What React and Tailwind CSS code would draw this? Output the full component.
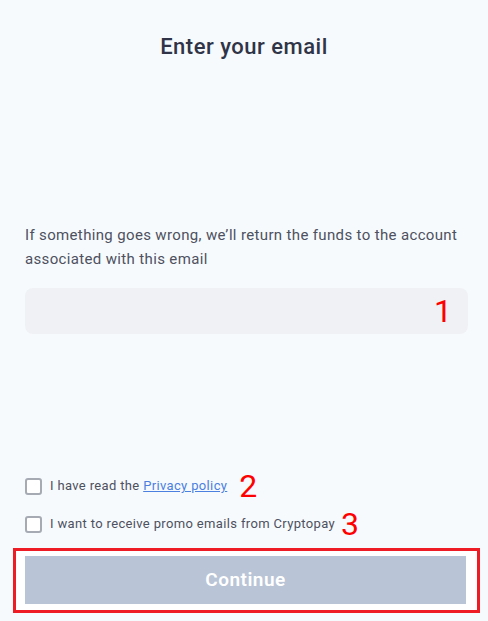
export default function App() {
  return (
    <div
      className="w-[488px] h-[621px] bg-[#f7fafd] flex flex-col"
      style={{ fontFamily: "Roboto, 'Liberation Sans', sans-serif" }}
    >
      {/* title */}
      <h1 className="pt-[33px] text-center text-[22px] font-medium tracking-[0.5px] text-[#2f3447] leading-[28px]">
        Enter your email
      </h1>

      {/* body */}
      <div className="pl-[25px] pr-[20px] mt-[162px]">
        <p className="text-[15px] leading-[24px] tracking-[0.35px] text-[#4d5160]">
          If something goes wrong, we’ll return the funds to the account associated with this email
        </p>
        <div className="relative mt-[17px] h-[46px] rounded-lg bg-[#eff1f5]">
          <span className="absolute right-[16px] top-[4px] text-[32px] leading-[38px] text-[#ff0000]">1</span>
        </div>
      </div>

      {/* checkboxes */}
      <div className="px-[25px] mt-[143px] flex flex-col gap-[20px]">
        <label className="flex items-center gap-[8px] h-[18px]">
          <span className="w-[17px] h-[17px] rounded-[3px] border-2 border-[#a5aab3] bg-white"></span>
          <span className="text-[13px] tracking-[0.35px] text-[#4d5160]">
            I have read the{" "}
            <a href="#" className="text-[#4b7fe0] underline">Privacy policy</a>
          </span>
          <span className="ml-[4px] text-[32px] leading-[18px] text-[#ff0000]">2</span>
        </label>
        <label className="flex items-center gap-[8px] h-[18px]">
          <span className="w-[17px] h-[17px] rounded-[3px] border-2 border-[#a5aab3] bg-white"></span>
          <span className="text-[13px] tracking-[0.35px] text-[#4d5160]">I want to receive promo emails from Cryptopay</span>
          <span className="-ml-[2px] text-[32px] leading-[18px] text-[#ff0000]">3</span>
        </label>
      </div>

      {/* button */}
      <div className="mt-[15px] ml-[13px] w-[467px] h-[65px] border-[3px] border-[#ee1c25] bg-white pl-[9px] pr-[11px] pt-[5px]">
        <button className="w-full h-[48px] bg-[#b9c4d6] text-white text-[19px] tracking-[0.5px] font-semibold">
          Continue
        </button>
      </div>
    </div>
  );
}
